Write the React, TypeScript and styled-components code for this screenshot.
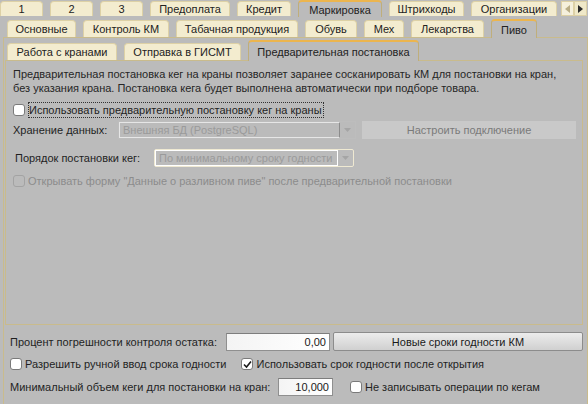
import styled, { createGlobalStyle, css } from "styled-components";

const GlobalStyle = createGlobalStyle`
  html, body { margin: 0; padding: 0; background: #bbbbbb; }
  body {
    font-family: "Liberation Sans", Arial, sans-serif;
    font-size: 11px;
    color: #1f1f1f;
  }
`;

const Window = styled.div`
  width: 588px;
  height: 404px;
  overflow: hidden;
  background: #bbbbbb;
  display: flex;
  flex-direction: column;
`;

// tab strips
const TabRow = styled.div<{ $height: number; $indent: number }>`
  display: flex;
  align-items: flex-end;
  gap: 7px;
  height: ${(p) => p.$height}px;
  padding-left: ${(p) => p.$indent}px;
  position: relative;
  z-index: 2;
  flex-shrink: 0;
`;

const Tab = styled.div<{ $w: number; $h: number; $active?: boolean }>`
  box-sizing: border-box;
  width: ${(p) => p.$w}px;
  height: ${(p) => p.$h}px;
  display: flex;
  align-items: center;
  justify-content: center;
  background: #f3eccf;
  border: 1px solid #ddd1a6;
  border-bottom: none;
  border-radius: 4px 4px 0 0;
  white-space: nowrap;
  color: #222;
  ${(p) =>
    p.$active &&
    css`
      background: #bbbbbb;
      border-color: #bfae7b;
      border-top: 2px solid #ecb54e;
      margin-bottom: -1px;
      padding-top: 1px;
    `}
`;

const Scroller = styled.div`
  display: flex;
  margin-left: -3px;
  height: 15px;
  align-self: flex-start;
  margin-top: 1px;
`;

const ScrollBtn = styled.div<{ $light?: boolean }>`
  width: 13px;
  height: 15px;
  display: flex;
  align-items: center;
  justify-content: center;
  background: ${(p) => (p.$light ? "#f5f0dc" : "#efe8c8")};
  border: 1px solid #ddd1a6;
  box-sizing: border-box;
`;

const Page = styled.div`
  flex: 1;
  display: flex;
  flex-direction: column;
  padding-top: 3px;
`;

const Panel2 = styled.div`
  flex: 1;
  margin-left: 3px;
  width: 585px;
  box-sizing: border-box;
  border: 1px solid #c9bb8c;
  border-bottom: none;
  display: flex;
  flex-direction: column;
`;

const Panel3 = styled.div`
  box-sizing: border-box;
  margin-left: 1px;
  width: 578px;
  height: 265px;
  border: 1px solid #c9bb8c;
  padding: 6px 0 0 7px;
  display: flex;
  flex-direction: column;
  flex-shrink: 0;
`;

const Description = styled.div`
  line-height: 14px;
  color: #262626;
`;

const Row = styled.div<{ $h: number; $top: number; $gap?: number }>`
  display: flex;
  align-items: center;
  height: ${(p) => p.$h}px;
  margin-top: ${(p) => p.$top}px;
  gap: ${(p) => p.$gap ?? 0}px;
  flex-shrink: 0;
`;

const Label = styled.span<{ $w?: number; $muted?: boolean; $indent?: number }>`
  white-space: nowrap;
  ${(p) => p.$w && `width: ${p.$w}px;`}
  box-sizing: border-box;
  padding-left: ${(p) => p.$indent ?? 0}px;
  flex-shrink: 0;
  color: ${(p) => (p.$muted ? "#8c8c8c" : "#1f1f1f")};
`;

const Box = styled.span<{ $disabled?: boolean }>`
  box-sizing: border-box;
  width: 12px;
  height: 12px;
  border-radius: 3px;
  border: 1px solid ${(p) => (p.$disabled ? "#a3a3a3" : "#7a7a7a")};
  background: ${(p) => (p.$disabled ? "#bbbbbb" : "#ffffff")};
  display: inline-flex;
  align-items: center;
  justify-content: center;
  flex-shrink: 0;
  margin-right: 3px;
`;

const Focus = styled.span`
  border: 1px dotted #333;
  padding: 1px 1px 1px 0;
  white-space: nowrap;
`;

const CheckWrap = styled.label`
  display: inline-flex;
  align-items: center;
  white-space: nowrap;
`;

const Check = ({
  checked,
  disabled,
  children,
  focused,
}: {
  checked?: boolean;
  disabled?: boolean;
  focused?: boolean;
  children: string;
}) => (
  <CheckWrap>
    <Box $disabled={disabled}>
      {checked && (
        <svg width="9" height="9" viewBox="0 0 9 9">
          <path d="M1 4.5 L3.5 7 L8 1.5" fill="none" stroke="#1a1a1a" strokeWidth="1.6" />
        </svg>
      )}
    </Box>
    {focused ? <Focus>{children}</Focus> : <Label $muted={disabled}>{children}</Label>}
  </CheckWrap>
);

const Select = styled.div<{ $w: number; $light?: boolean }>`
  box-sizing: border-box;
  width: ${(p) => p.$w}px;
  height: 18px;
  display: flex;
  border: 1px solid ${(p) => (p.$light ? "#efe9d2" : "#bdbdbd")};
  border-radius: ${(p) => (p.$light ? "2px" : "0")};
  flex-shrink: 0;
`;

const SelectValue = styled.div<{ $light?: boolean }>`
  flex: 1;
  box-sizing: border-box;
  border: 1px solid ${(p) => (p.$light ? "#ffffff" : "#e6e6e6")};
  border-right-color: ${(p) => (p.$light ? "#ffffff" : "#8c8c8c")};
  color: #9a9a9a;
  padding-left: 3px;
  display: flex;
  align-items: center;
  white-space: nowrap;
  overflow: hidden;
`;

const SelectArrow = styled.div`
  width: 15px;
  display: flex;
  align-items: center;
  justify-content: center;
`;

const FlatButton = styled.div`
  box-sizing: border-box;
  width: 214px;
  height: 18px;
  margin-left: 6px;
  background: #c9c9c9;
  color: #7a7a7a;
  display: flex;
  align-items: center;
  justify-content: center;
`;

const Bottom = styled.div`
  padding-left: 6px;
  display: flex;
  flex-direction: column;
`;

const Field = styled.div<{ $w: number }>`
  box-sizing: border-box;
  width: ${(p) => p.$w}px;
  height: 18px;
  border: 1px solid #8f8f8f;
  border-top-color: #7d7d7d;
  background: linear-gradient(to right, #f4f4f4, #ffffff);
  display: flex;
  align-items: center;
  justify-content: flex-end;
  padding-right: 3px;
  color: #1a1a1a;
  flex-shrink: 0;
`;

const Spacer = styled.span<{ $w: number }>`
  width: ${(p) => p.$w}px;
  flex-shrink: 0;
`;

const Button = styled.div`
  box-sizing: border-box;
  width: 250px;
  height: 19px;
  margin-left: 3px;
  border: 1px solid #8c8c8c;
  border-radius: 2px;
  background: linear-gradient(#ececec, #d0d0d0);
  display: flex;
  align-items: center;
  justify-content: center;
  color: #1a1a1a;
`;

const Arrow = ({ color }: { color: string }) => (
  <svg width="7" height="4" viewBox="0 0 7 4">
    <path d="M0 0 H7 L3.5 4 Z" fill={color} />
  </svg>
);

const top = [
  { t: "1", w: 43 },
  { t: "2", w: 43 },
  { t: "3", w: 43 },
  { t: "Предоплата", w: 80 },
  { t: "Кредит", w: 54 },
  { t: "Маркировка", w: 84, a: true },
  { t: "Штрихкоды", w: 75 },
  { t: "Организации", w: 86 },
];

const mid = [
  { t: "Основные", w: 69 },
  { t: "Контроль КМ", w: 86 },
  { t: "Табачная продукция", w: 122 },
  { t: "Обувь", w: 52 },
  { t: "Мех", w: 40 },
  { t: "Лекарства", w: 73 },
  { t: "Пиво", w: 46, a: true },
];

const inner = [
  { t: "Работа с кранами", w: 110 },
  { t: "Отправка в ГИСМТ", w: 117 },
  { t: "Предварительная постановка", w: 171, a: true },
];

export default function App() {
  return (
    <>
      <GlobalStyle />
      <Window>
        <TabRow $height={16} $indent={0}>
          {top.map((x) => (
            <Tab key={x.t} $w={x.w} $h={x.a ? 17 : 15} $active={x.a}>
              {x.t}
            </Tab>
          ))}
          <Scroller>
            <ScrollBtn $light>
              <svg width="5" height="8" viewBox="0 0 5 8">
                <path d="M5 0 V8 L0 4 Z" fill="#b9ad86" />
              </svg>
            </ScrollBtn>
            <ScrollBtn>
              <svg width="5" height="8" viewBox="0 0 5 8">
                <path d="M0 0 V8 L5 4 Z" fill="#2a2a2a" />
              </svg>
            </ScrollBtn>
          </Scroller>
        </TabRow>
        <Page>
          <TabRow $height={18} $indent={7}>
            {mid.map((x) => (
              <Tab key={x.t} $w={x.w} $h={x.a ? 19 : 17} $active={x.a}>
                {x.t}
              </Tab>
            ))}
          </TabRow>
          <Panel2>
            <TabRow $height={22} $indent={3}>
              {inner.map((x) => (
                <Tab key={x.t} $w={x.w} $h={x.a ? 21 : 17} $active={x.a}>
                  {x.t}
                </Tab>
              ))}
            </TabRow>
            <Panel3>
              <Description>
                Предварительная постановка кег на краны позволяет заранее сосканировать КМ для постановки на кран,
                <br />
                без указания крана. Постановка кега будет выполнена автоматически при подборе товара.
              </Description>
              <Row $h={16} $top={7}>
                <Check focused>Использовать предварительную постановку кег на краны</Check>
              </Row>
              <Row $h={18} $top={3}>
                <Label $w={105}>Хранение данных:</Label>
                <Select $w={238}>
                  <SelectValue>Внешняя БД (PostgreSQL)</SelectValue>
                  <SelectArrow>
                    <Arrow color="#a5a5a5" />
                  </SelectArrow>
                </Select>
                <FlatButton>Настроить подключение</FlatButton>
              </Row>
              <Row $h={18} $top={10}>
                <Label $w={141} $indent={2}>
                  Порядок постановки кег:
                </Label>
                <Select $w={200} $light>
                  <SelectValue $light>По минимальному сроку годности</SelectValue>
                  <SelectArrow>
                    <Arrow color="#a5a5a5" />
                  </SelectArrow>
                </Select>
              </Row>
              <Row $h={16} $top={6}>
                <Check disabled>Открывать форму "Данные о разливном пиве" после предварительной постановки</Check>
              </Row>
            </Panel3>
            <Bottom>
              <Row $h={19} $top={7}>
                <Label $w={216}>Процент погрешности контроля остатка:</Label>
                <Field $w={104}>0,00</Field>
                <Button>Новые сроки годности КМ</Button>
              </Row>
              <Row $h={16} $top={5} $gap={15}>
                <Check>Разрешить ручной ввод срока годности</Check>
                <Check checked>Использовать срок годности после открытия</Check>
              </Row>
              <Row $h={18} $top={6}>
                <Label $w={268}>Минимальный объем кеги для постановки на кран:</Label>
                <Field $w={55}>10,000</Field>
                <Spacer $w={17} />
                <Check>Не записывать операции по кегам</Check>
              </Row>
            </Bottom>
          </Panel2>
        </Page>
      </Window>
    </>
  );
}
